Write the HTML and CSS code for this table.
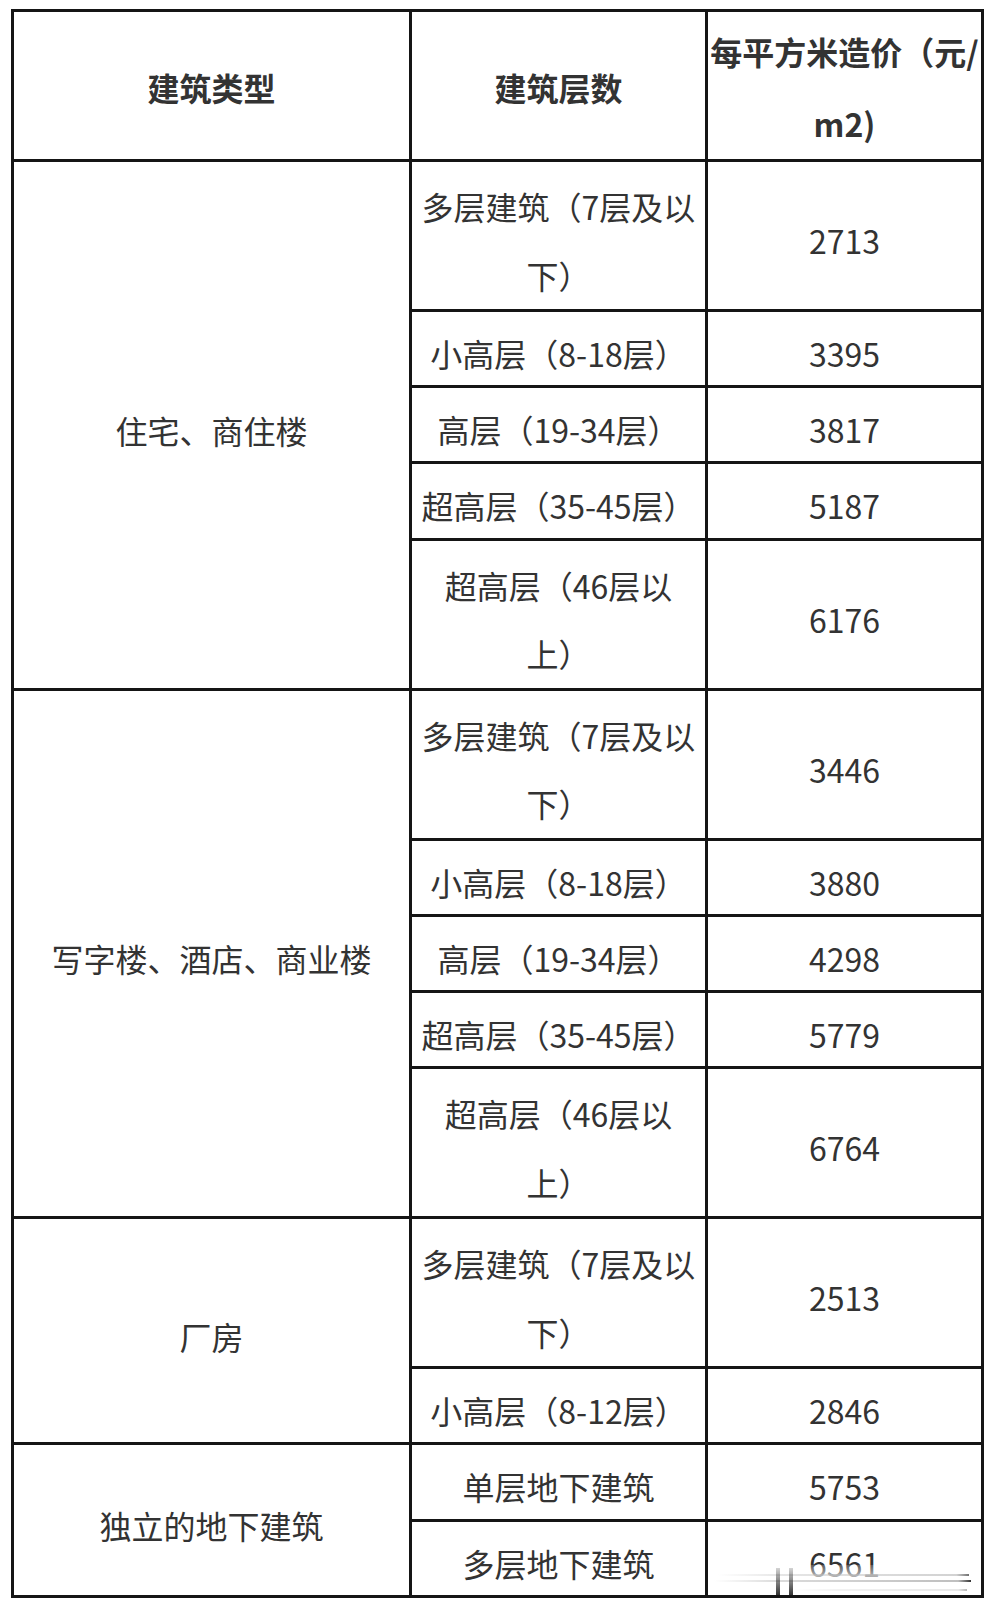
FILE: index.html
```html
<!DOCTYPE html>
<html lang="zh-CN">
<head>
<meta charset="utf-8">
<title>建筑造价表</title>
<link rel="stylesheet" href="styles.css">
</head>
<body>
<table class="cost">
  <colgroup>
    <col class="c-type">
    <col class="c-floor">
    <col class="c-price">
  </colgroup>
  <thead>
    <tr class="head">
      <th>建筑类型</th>
      <th>建筑层数</th>
      <th class="tight">每平方米造价（元/<br>m2)</th>
    </tr>
  </thead>
  <tbody>
    <tr class="dbl">
      <td class="group" rowspan="5">住宅、商住楼</td>
      <td>多层建筑（7层及以<br>下）</td>
      <td>2713</td>
    </tr>
    <tr class="sgl"><td>小高层（8-18层）</td><td>3395</td></tr>
    <tr class="sgl"><td>高层（19-34层）</td><td>3817</td></tr>
    <tr class="sgl"><td>超高层（35-45层）</td><td>5187</td></tr>
    <tr class="dbl"><td>超高层（46层以<br>上）</td><td>6176</td></tr>

    <tr class="dbl">
      <td class="group" rowspan="5">写字楼、酒店、商业楼</td>
      <td>多层建筑（7层及以<br>下）</td>
      <td>3446</td>
    </tr>
    <tr class="sgl"><td>小高层（8-18层）</td><td>3880</td></tr>
    <tr class="sgl"><td>高层（19-34层）</td><td>4298</td></tr>
    <tr class="sgl"><td>超高层（35-45层）</td><td>5779</td></tr>
    <tr class="dbl"><td>超高层（46层以<br>上）</td><td>6764</td></tr>

    <tr class="dbl">
      <td class="group" rowspan="2">厂房</td>
      <td>多层建筑（7层及以<br>下）</td>
      <td>2513</td>
    </tr>
    <tr class="sgl"><td>小高层（8-12层）</td><td>2846</td></tr>

    <tr class="sgl">
      <td class="group" rowspan="2">独立的地下建筑</td>
      <td>单层地下建筑</td>
      <td>5753</td>
    </tr>
    <tr class="sgl">
      <td>多层地下建筑</td>
      <td class="marked">6561<span class="watermark"><i class="wl l1"></i><i class="wl l2"></i><i class="wl l3"></i><i class="bar b1"></i><i class="bar b2"></i></span></td>
    </tr>
  </tbody>
</table>
</body>
</html>
```

FILE: styles.css
```css
html, body {
  margin: 0;
  padding: 0;
  background: #ffffff;
}

body {
  font-family: "Noto Sans CJK SC", "Noto Sans", sans-serif;
  color: #333333;
}

.cost {
  border-collapse: collapse;
  table-layout: fixed;
  width: 970px;
  margin: 9px 0 0 11px;
  border: 3px solid #151515;
}

.c-type { width: 398px; }
.c-floor { width: 296px; }
.c-price { width: 276px; }

.cost th,
.cost td {
  border: 3px solid #151515;
  padding: 10px 4px 0;
  text-align: center;
  vertical-align: middle;
  font-size: 32px;
  color: #333333;
  white-space: nowrap;
}

.cost th {
  font-weight: 700;
}

.head th {
  line-height: 71.5px;
  padding-top: 4px;
}

.cost th.tight {
  padding-left: 0;
  padding-right: 0;
  overflow: hidden;
}

.dbl td {
  line-height: 68.5px;
}

.sgl td {
  line-height: 63.2px;
}

.cost td.group {
  line-height: 40px;
}

.marked {
  position: relative;
}

.watermark {
  position: absolute;
  left: 6px;
  right: 6px;
  bottom: 0;
  height: 30px;
  background: linear-gradient(to bottom, rgba(255,255,255,0.2), rgba(255,255,255,0.6) 35%, rgba(255,255,255,0.75));
}

.wl {
  position: absolute;
  height: 2px;
  background: linear-gradient(to right, rgba(200,200,200,0), rgba(195,195,195,0.6) 25%, rgba(175,175,175,0.8) 95%, #333333 100%);
}

.l1 { left: 4px; right: 6px; top: 9px; opacity: 0.7; }
.l2 { left: 0; right: 4px; top: 15px; }
.l3 { left: 80px; right: 8px; top: 24px; opacity: 0.35; }

.bar {
  position: absolute;
  top: 3px;
  bottom: 0;
  width: 4px;
  background: linear-gradient(to bottom, rgba(40,40,40,0.2), rgba(30,30,30,0.9));
}

.b1 { left: 62px; }
.b2 { left: 75px; }
```
